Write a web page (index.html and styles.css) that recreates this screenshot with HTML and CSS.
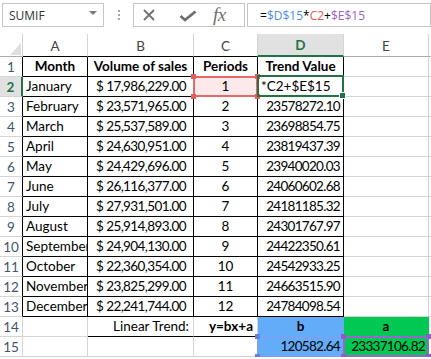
FILE: index.html
```html
<!DOCTYPE html>
<html lang="en">
<head>
    <meta charset="UTF-8">
    <title>Linear Trend</title>
    <link rel="stylesheet" href="styles.css">
</head>
<body>
    <!-- Formula bar -->
    <div class="topbar">
        <div class="namebox"><span>SUMIF</span><span class="caret"></span></div>
        <div class="grip"><i></i><i></i><i></i></div>
        <div class="fbtns">
            <svg class="ico-x" width="12" height="12" viewBox="0 0 12 12"><path d="M1 1 L11 11 M11 1 L1 11" /></svg>
            <svg class="ico-ok" width="18" height="12" viewBox="0 0 18 12"><path d="M1.5 6 L6 10 L16.5 1.5" /></svg>
            <span class="fx">fx</span>
        </div>
        <div class="formula">=<span class="t-blue">$D$15</span>*<span class="t-red">C2</span>+<span class="t-purple">$E$15</span></div>
    </div>

    <!-- Sheet -->
    <div class="sheet">
        <div class="corner"><span></span></div>
        <div class="ch top">A</div>
        <div class="ch top">B</div>
        <div class="ch top">C</div>
        <div class="ch top sel">D</div>
        <div class="ch">E</div>
        <div class="ch"></div>

        <div class="rh tb">1</div>
        <div class="c t bold mid">Month</div>
        <div class="c t bold mid">Volume of sales</div>
        <div class="c t bold mid">Periods</div>
        <div class="c t bold mid">Trend Value</div>
        <div class="c"></div>
        <div class="c"></div>

        <div class="rh tb sel">2</div>
        <div class="c t">January</div>
        <div class="c t money">$ 17,986,229.00</div>
        <div class="c t mid refcell red-fill"><span class="hl hl-red"><i class="q tl"></i><i class="q tr"></i><i class="q bl"></i><i class="q br"></i></span>1</div>
        <div class="c t active">*C2+$E$15<span class="cursor"><i class="handle"></i></span></div>
        <div class="c"></div>
        <div class="c"></div>

        <div class="rh tb">3</div>
        <div class="c t">February</div>
        <div class="c t money">$ 23,571,965.00</div>
        <div class="c t mid">2</div>
        <div class="c t num">23578272.10</div>
        <div class="c"></div>
        <div class="c"></div>

        <div class="rh tb">4</div>
        <div class="c t">March</div>
        <div class="c t money">$ 25,537,589.00</div>
        <div class="c t mid">3</div>
        <div class="c t num">23698854.75</div>
        <div class="c"></div>
        <div class="c"></div>

        <div class="rh tb">5</div>
        <div class="c t">April</div>
        <div class="c t money">$ 24,630,951.00</div>
        <div class="c t mid">4</div>
        <div class="c t num">23819437.39</div>
        <div class="c"></div>
        <div class="c"></div>

        <div class="rh tb">6</div>
        <div class="c t">May</div>
        <div class="c t money">$ 24,429,696.00</div>
        <div class="c t mid">5</div>
        <div class="c t num">23940020.03</div>
        <div class="c"></div>
        <div class="c"></div>

        <div class="rh tb">7</div>
        <div class="c t">June</div>
        <div class="c t money">$ 26,116,377.00</div>
        <div class="c t mid">6</div>
        <div class="c t num">24060602.68</div>
        <div class="c"></div>
        <div class="c"></div>

        <div class="rh tb">8</div>
        <div class="c t">July</div>
        <div class="c t money">$ 27,931,501.00</div>
        <div class="c t mid">7</div>
        <div class="c t num">24181185.32</div>
        <div class="c"></div>
        <div class="c"></div>

        <div class="rh tb">9</div>
        <div class="c t">August</div>
        <div class="c t money">$ 25,914,893.00</div>
        <div class="c t mid">8</div>
        <div class="c t num">24301767.97</div>
        <div class="c"></div>
        <div class="c"></div>

        <div class="rh tb">10</div>
        <div class="c t">September</div>
        <div class="c t money">$ 24,904,130.00</div>
        <div class="c t mid">9</div>
        <div class="c t num">24422350.61</div>
        <div class="c"></div>
        <div class="c"></div>

        <div class="rh tb">11</div>
        <div class="c t">October</div>
        <div class="c t money">$ 22,360,354.00</div>
        <div class="c t mid">10</div>
        <div class="c t num">24542933.25</div>
        <div class="c"></div>
        <div class="c"></div>

        <div class="rh tb">12</div>
        <div class="c t">November</div>
        <div class="c t money">$ 23,825,299.00</div>
        <div class="c t mid">11</div>
        <div class="c t num">24663515.90</div>
        <div class="c"></div>
        <div class="c"></div>

        <div class="rh tb">13</div>
        <div class="c t">December</div>
        <div class="c t money">$ 22,241,744.00</div>
        <div class="c t mid">12</div>
        <div class="c t num">24784098.54</div>
        <div class="c"></div>
        <div class="c"></div>

        <div class="rh">14</div>
        <div class="c"></div>
        <div class="c ul label">Linear Trend:</div>
        <div class="c ul bold label">y=bx+a</div>
        <div class="c blue bold mid">b</div>
        <div class="c green bold mid">a</div>
        <div class="c"></div>

        <div class="rh">15</div>
        <div class="c"></div>
        <div class="c"></div>
        <div class="c"></div>
        <div class="c blue num refcell"><span class="hl hl-blue"><i class="q tl"></i><i class="q tr"></i><i class="q bl"></i><i class="q br"></i></span>120582.64</div>
        <div class="c green num refcell"><span class="hl hl-purple"><i class="q tl"></i><i class="q tr"></i><i class="q bl"></i><i class="q br"></i></span>23337106.82</div>
        <div class="c"></div>
    </div>
</body>
</html>
```

FILE: styles.css
```css
body {
    margin: 0;
    background: #fff;
    font-family: Lato, "Open Sans", sans-serif;
    color: #000;
    overflow: hidden;
}

/* ---------- formula bar ---------- */
.topbar {
    display: flex;
    height: 24px;
    padding: 3px 0 0 2px;
    font-family: "Open Sans", "Noto Sans", sans-serif;
}

.namebox {
    width: 102px;
    box-sizing: border-box;
    border: 1px solid #c6c6c6;
    display: flex;
    align-items: center;
    justify-content: space-between;
    padding: 0 6px 0 6px;
    font-size: 12px;
    color: #333;
}

.caret {
    width: 0;
    height: 0;
    border-left: 4px solid transparent;
    border-right: 4px solid transparent;
    border-top: 4px solid #7a7a7a;
    margin-bottom: 4px;
}

.grip {
    width: 29px;
    display: flex;
    flex-direction: column;
    align-items: center;
    justify-content: center;
    gap: 2px;
}

.grip i {
    display: block;
    width: 2px;
    height: 2px;
    background: #a6a6a6;
}

.fbtns {
    width: 112px;
    box-sizing: border-box;
    border: 1px solid #c6c6c6;
    display: flex;
    align-items: center;
    padding-left: 9px;
}

.ico-x path,
.ico-ok path {
    fill: none;
    stroke: #6f6f6f;
    stroke-width: 1.8;
}

.ico-ok {
    margin-left: 24px;
    margin-top: 2px;
}

.ico-ok path {
    stroke-width: 2.8;
    stroke-linejoin: miter;
}

.fx {
    margin-left: 16px;
    font-family: "Liberation Serif", serif;
    font-style: italic;
    font-size: 19px;
    color: #6f6f6f;
    letter-spacing: -0.5px;
    margin-top: -1px;
}

.formula {
    flex: 1;
    margin-left: 2px;
    box-sizing: border-box;
    border: 1px solid #c6c6c6;
    display: flex;
    align-items: center;
    padding-left: 12px;
    font-size: 12px;
    color: #000;
}

.t-blue { color: #4f8ef0; }
.t-red { color: #ea5450; }
.t-purple { color: #9763c8; }

/* ---------- sheet ---------- */
.sheet {
    margin-top: 7px;
    display: grid;
    grid-template-columns: 23px 65px 106px 64px 86px 85px 1fr;
    grid-template-rows: 23px repeat(15, 20px);
    font-size: 13.5px;
}

.sheet > div {
    box-sizing: border-box;
    border-right: 1px solid #d4d4d4;
    border-bottom: 1px solid #d4d4d4;
    white-space: nowrap;
    min-width: 0;
}

.corner {
    display: flex;
    justify-content: flex-end;
    align-items: flex-end;
    padding: 0 1px 1px 0;
    border-bottom-color: #ababab !important;
}

.corner span {
    width: 11px;
    height: 12px;
    background: #dfdfdf;
    clip-path: polygon(100% 0, 100% 100%, 0 100%);
}

.ch {
    display: flex;
    align-items: center;
    justify-content: center;
    color: #444;
    padding-top: 1px;
    border-bottom-color: #ababab !important;
}

.ch.top {
    border-bottom-color: #000 !important;
}

.ch.sel {
    background: #e1e1e1;
    color: #217346;
    font-weight: bold;
    border-bottom: 2px solid #217346 !important;
}

.rh {
    display: flex;
    align-items: center;
    justify-content: center;
    color: #44546a;
    padding-top: 1px;
}

.rh.tb {
    border-right-color: #000 !important;
}

.rh.sel {
    background: #e1e1e1;
    color: #217346;
    font-weight: bold;
    border-right: 2px solid #217346 !important;
}

.c {
    display: flex;
    align-items: flex-end;
    padding: 0 3px 2px 3px;
    line-height: 15px;
    overflow: hidden;
}

.c.t {
    border-right-color: #000;
    border-bottom-color: #000;
}

.c.ul {
    border-bottom-color: #000;
}

.bold { font-weight: bold; }
.mid { justify-content: center; }
.num { justify-content: flex-end; letter-spacing: -0.7px; }
.money { justify-content: flex-end; padding-right: 7px; letter-spacing: -0.6px; }
.label { justify-content: flex-end; padding-right: 4px; }

.blue {
    background: #63acf7;
    border-right-color: #63acf7 !important;
    border-bottom-color: #63acf7 !important;
}

.green {
    background: #00c853;
    border-right-color: #00c853 !important;
    border-bottom-color: #00c853 !important;
}

.red-fill {
    background: #fde9ea;
}

/* ---------- selection / reference highlights ---------- */
.refcell,
.active {
    position: relative;
    overflow: visible;
}

.hl,
.cursor {
    position: absolute;
    left: -1px;
    top: -1px;
    right: -1px;
    bottom: -1px;
    border: 2px solid;
    pointer-events: none;
}

.hl-red { border-color: #e46a6a; }
.hl-blue { border-color: #77a3f2; }
.hl-purple { border-color: #9a66cc; }

.q {
    position: absolute;
    width: 5px;
    height: 5px;
}

.hl-red .q { background: #e65b5d; }
.hl-blue .q { background: #5d86e4; }
.hl-purple .q { background: #8e5cc6; }

.q.tl { left: -4px; top: -4px; }
.q.tr { right: -4px; top: -4px; }
.q.bl { left: -4px; bottom: -4px; }
.q.br { right: -4px; bottom: -4px; }

.cursor {
    top: -2px;
    border-color: #217346;
    z-index: 2;
}

.handle {
    position: absolute;
    right: -4px;
    bottom: -4px;
    width: 5px;
    height: 5px;
    background: #217346;
    border: 1px solid #fff;
}
```
